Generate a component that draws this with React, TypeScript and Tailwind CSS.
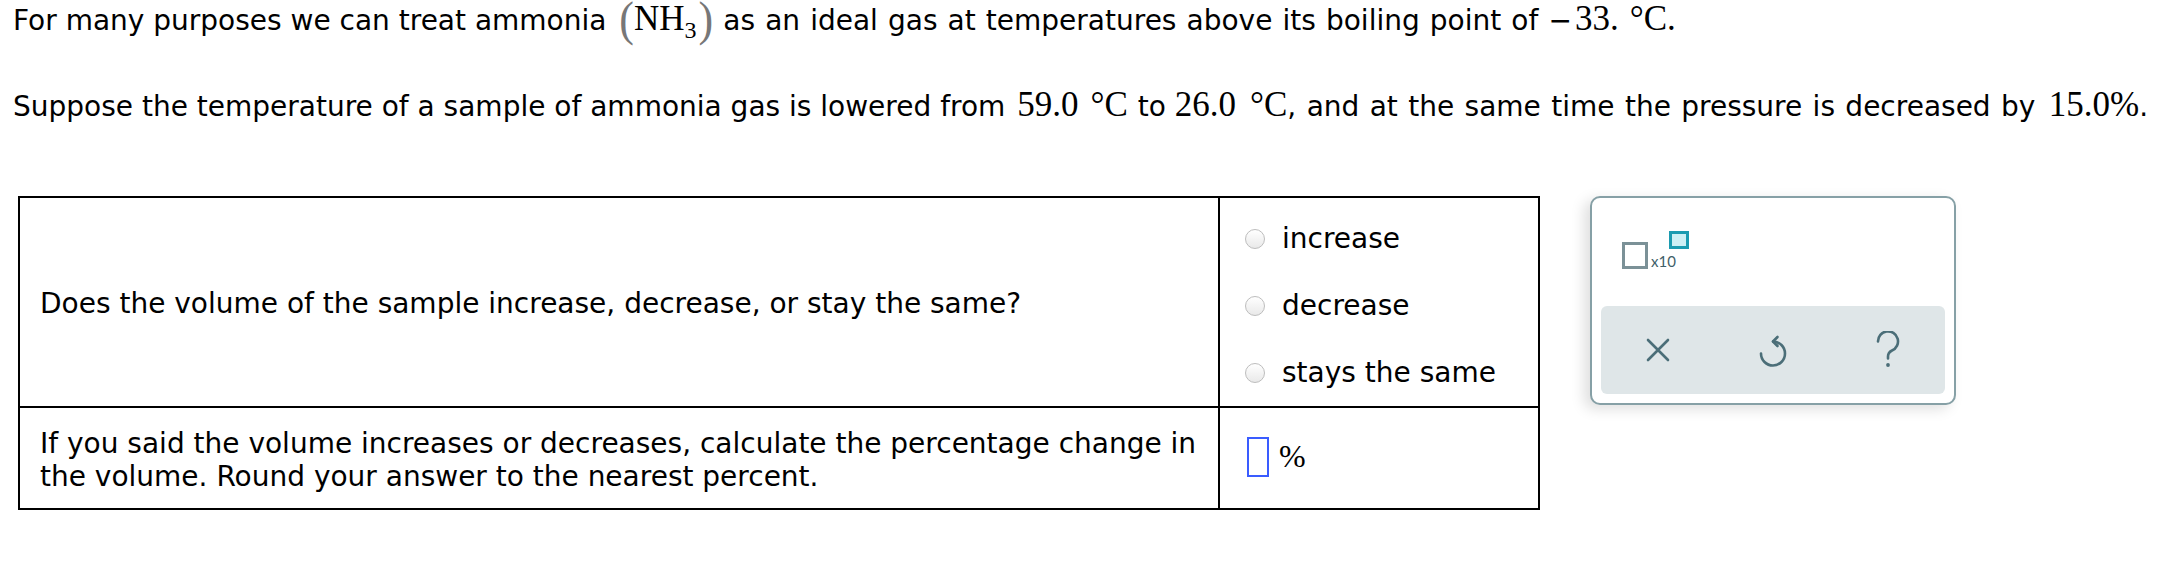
import React from "react";

function Radio({ label }: { label: string }) {
  return (
    <div className="flex items-center h-[70px]">
      <div className="w-[20px] h-[20px] rounded-full border border-[#bdbdbd] bg-gradient-to-b from-white to-[#e9e9e9]" />
      <span className="ml-[17px] leading-none">{label}</span>
    </div>
  );
}

export default function App() {
  return (
    <div className="w-[2166px] h-[584px] bg-white text-black overflow-hidden pl-[13px] pt-[2px] font-['DejaVu_Sans','Verdana',sans-serif] text-[28px]">
      <div className="h-[86px] leading-[34px] whitespace-nowrap">
        For many purposes we can treat ammonia{" "}
        <span className="inline-block align-top h-[50px] -my-[7px] leading-[50px] text-[44px] ml-[4px] text-[#777777] font-['Liberation_Serif',serif] scale-y-110">
          (
        </span>
        <span className="font-['Liberation_Serif',serif] text-[35px]">
          NH<span className="relative top-[8px] text-[24px]">3</span>
        </span>
        <span className="inline-block align-top h-[50px] -my-[7px] leading-[50px] text-[44px] ml-[2px] text-[#777777] font-['Liberation_Serif',serif] scale-y-110">
          )
        </span>
        <span className="[word-spacing:1.2px]">
          {" "}as an ideal gas at temperatures above its boiling point of{" "}
        </span>
        <span className="font-['Liberation_Serif',serif] text-[35px]">
          <span className="font-['DejaVu_Sans',sans-serif] text-[28px]">−</span>
          <span className="ml-[3px]">33.</span>
          <span className="ml-[11px]">°C.</span>
        </span>
      </div>
      <div className="h-[108px] leading-[34px] whitespace-nowrap">
        Suppose the temperature of a sample of ammonia gas is lowered from{" "}
        <span className="font-['Liberation_Serif',serif] text-[35px] ml-[3px] mr-[1px]">
          59.0<span className="ml-[12px]">°C</span>
        </span>{" "}
        to{" "}
        <span className="font-['Liberation_Serif',serif] text-[35px]">
          26.0<span className="ml-[14px]">°C</span>
        </span>
        <span className="[word-spacing:1.5px]">, and at the same time the pressure is decreased by </span>
        <span className="font-['Liberation_Serif',serif] text-[35px] ml-[3px]">15.0%</span>.
      </div>

      <div className="flex items-start">
        <div className="ml-[5px] w-[1522px] border-2 border-black">
          <div className="flex h-[210px] border-b-2 border-black">
            <div className="w-[1200px] border-r-2 border-black flex items-center pl-[20px] pt-[4px] whitespace-nowrap">
              Does the volume of the sample increase, decrease, or stay the same?
            </div>
            <div className="flex-1 flex flex-col justify-center pl-[25px] pt-[7px]">
              <Radio label="increase" />
              <Radio label="decrease" />
              <Radio label="stays the same" />
            </div>
          </div>
          <div className="flex h-[100px]">
            <div className="w-[1200px] border-r-2 border-black flex items-center pl-[20px] pt-[4px] leading-[33px] whitespace-nowrap">
              <div>
                If you said the volume increases or decreases, calculate the percentage change in
                <br />
                the volume. Round your answer to the nearest percent.
              </div>
            </div>
            <div className="flex-1 flex items-center pl-[27px]">
              <div className="w-[22px] h-[40px] border-2 border-[#3a5cff] -mt-[2px]" />
              <span className="ml-[10px] font-['Liberation_Serif',serif] text-[32px] leading-none -mt-[4px]">%</span>
            </div>
          </div>
        </div>

        <div className="ml-[50px] w-[366px] h-[209px] rounded-[10px] border-2 border-[#86a0a6] bg-white shadow-[-6px_4px_14px_rgba(0,0,0,0.13)] flex flex-col">
          <div className="flex pt-[33px] pl-[30px]">
            <div className="mt-[11px] w-[26px] h-[27px] border-[3px] border-[#7b9197]" />
            <span className="mt-[23px] ml-[3px] text-[15px] leading-none text-[#3f5f69] font-['Lato',sans-serif]">x10</span>
            <div className="-ml-[7px] w-[20px] h-[18px] border-[3px] border-[#1b9bb0] bg-[#cdeff4]" />
          </div>
          <div className="mt-auto mx-[9px] mb-[9px] h-[88px] rounded-[6px] bg-[#dfe6e8] grid grid-cols-3 items-center justify-items-center text-[#4b6e78]">
            <svg width="24" height="24" viewBox="0 0 24 24" fill="none" stroke="currentColor" strokeWidth="2.6" strokeLinecap="round">
              <path d="M2 2 L22 22 M22 2 L2 22" />
            </svg>
            <svg width="28" height="34" viewBox="0 0 28 34" fill="none" stroke="currentColor" strokeWidth="2.6" strokeLinecap="round" strokeLinejoin="round">
              <path d="M14 8.5 A12 12 0 1 1 2 20.5" />
              <path d="M18.5 4 L14 8.5 L18.5 13" />
            </svg>
            <svg width="26" height="38" viewBox="0 0 26 38" fill="none" stroke="currentColor" strokeWidth="2.6" strokeLinecap="round">
              <path d="M3 10.5 A10 10 0 1 1 17 19.5 Q13 21.5 13 25.5 V27.5" />
              <circle cx="13" cy="34" r="1.9" fill="currentColor" stroke="none" />
            </svg>
          </div>
        </div>
      </div>
    </div>
  );
}
